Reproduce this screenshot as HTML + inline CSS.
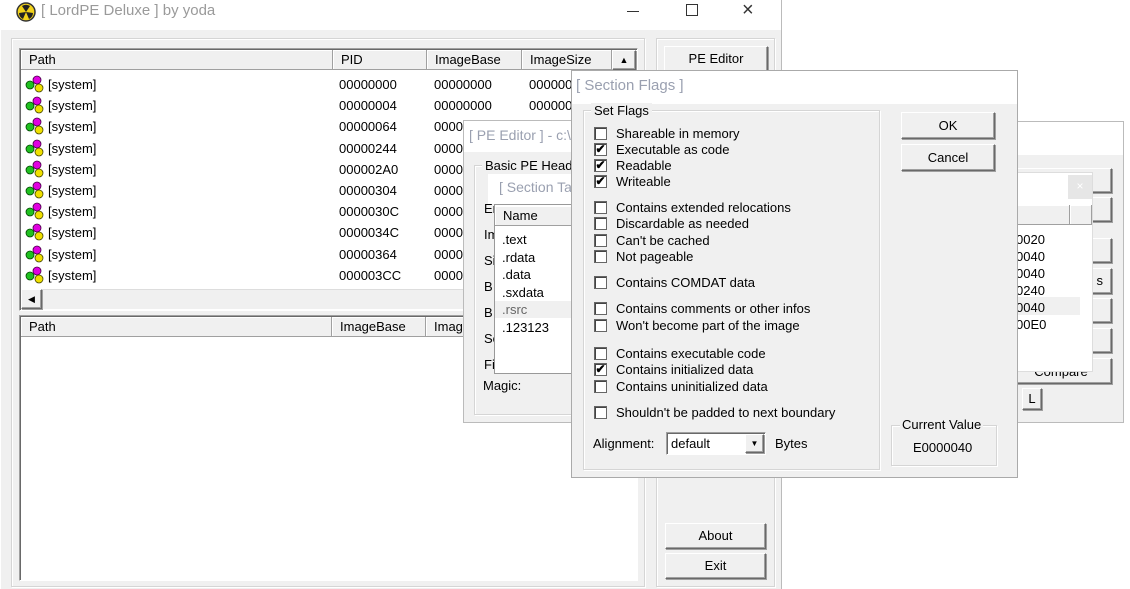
<!DOCTYPE html>
<html><head><meta charset="utf-8"><style>
*{box-sizing:border-box;margin:0;padding:0}
body{width:1130px;height:589px;background:#fff;position:relative;overflow:hidden;font-family:"Liberation Sans",sans-serif;font-size:12px;color:#000}
.a{position:absolute}
.g{background:#f0f0f0}
.w{background:#fff}
.sunk{border:1px solid #a0a0a0;border-right-color:#fff;border-bottom-color:#fff;box-shadow:inset 1px 1px 0 #696969}
.grp{border:1px solid #d5d5d5;box-shadow:inset 1px 1px 0 #fff,1px 1px 0 #fff}
.btn{position:absolute;background:#f0f0f0;border:1px solid #fff;border-right-color:#696969;border-bottom-color:#696969;box-shadow:1px 1px 0 #a0a0a0, inset -1px -1px 0 #a0a0a0;text-align:center;font-size:13px}
.hd{position:absolute;background:#f0f0f0;border-right:1px solid #a0a0a0;border-bottom:1px solid #a0a0a0;box-shadow:inset 1px 1px 0 #fff;height:20px;line-height:19px;padding-left:8px;font-size:13px}
.t{position:absolute;white-space:nowrap;font-size:13px}
.title{position:absolute;font-size:15px;color:#9aa0b0;white-space:nowrap}
.cb{position:absolute;width:13px;height:13px;background:#fff;border:1px solid #666;box-shadow:inset 1px 1px 0 #444;font-size:12px;line-height:11px;text-align:center;font-weight:bold}
.ic{position:absolute;width:22px;height:18px}
</style></head><body>

<div class="a w" style="left:0;top:0;width:782px;height:589px;border-right:1px solid #bbb"></div>
<svg class="a" style="left:16px;top:2px" width="20" height="20"><circle cx="10" cy="10" r="9" fill="#f2d21a" stroke="#333" stroke-width="1.5"/><path d="M10 10 L6 4 A7 7 0 0 1 14 4Z M10 10 L17 11 A7 7 0 0 1 13 17Z M10 10 L7 17 A7 7 0 0 1 3 11Z" fill="#222"/></svg>
<div class="title" style="left:41px;top:2px;color:#9a9a9a">[ LordPE Deluxe ] by yoda</div>
<div class="a" style="left:627px;top:11px;width:12px;height:1px;background:#333"></div>
<div class="a" style="left:686px;top:4px;width:12px;height:12px;border:1px solid #333"></div>
<div class="t" style="left:742px;top:-1px;font-size:20px;color:#333">×</div>
<div class="a g" style="left:1px;top:30px;width:780px;height:559px"></div>
<div class="a grp" style="left:11px;top:38px;width:634px;height:549px"></div>
<div class="a grp" style="left:656px;top:38px;width:119px;height:549px"></div>

<div class="a w sunk" style="left:19px;top:48px;width:619px;height:263px"></div>
<div class="hd" style="left:21px;top:50px;width:312px">Path</div>
<div class="hd" style="left:333px;top:50px;width:94px">PID</div>
<div class="hd" style="left:427px;top:50px;width:95px">ImageBase</div>
<div class="hd" style="left:522px;top:50px;width:90px">ImageSize</div>
<div class="btn" style="left:612px;top:50px;width:24px;height:20px;font-size:9px;line-height:18px">▲</div>
<div id="rows"></div>
<div class="a g" style="left:21px;top:289px;width:615px;height:20px;border-top:1px solid #ddd"></div>
<div class="btn" style="left:21px;top:289px;width:21px;height:20px;font-size:9px;line-height:18px">◀</div>

<div class="a w sunk" style="left:19px;top:315px;width:619px;height:266px"></div>
<div class="hd" style="left:21px;top:317px;width:311px">Path</div>
<div class="hd" style="left:332px;top:317px;width:94px">ImageBase</div>
<div class="hd" style="left:426px;top:317px;width:210px">ImageSize</div>

<div class="btn" style="left:664px;top:46px;width:104px;height:26px;line-height:23px">PE Editor</div>
<div class="btn" style="left:665px;top:523px;width:101px;height:26px;line-height:24px">About</div>
<div class="btn" style="left:665px;top:553px;width:101px;height:26px;line-height:24px">Exit</div>

<div class="a g" style="left:1000px;top:121px;width:124px;height:302px;border:1px solid #bbb"></div>
<div class="a w" style="left:1001px;top:122px;width:122px;height:33px"></div>
<div class="btn" style="left:1010px;top:168px;width:102px;height:25px"></div>
<div class="btn" style="left:1010px;top:197px;width:102px;height:25px"></div>
<div class="btn" style="left:1010px;top:238px;width:102px;height:25px"></div>
<div class="btn" style="left:1010px;top:268px;width:102px;height:26px;text-align:right;padding-right:8px;line-height:24px">s</div>
<div class="btn" style="left:1010px;top:298px;width:102px;height:25px"></div>
<div class="btn" style="left:1010px;top:328px;width:102px;height:25px"></div>
<div class="btn" style="left:1010px;top:358px;width:102px;height:26px;line-height:26px">Compare</div>
<div class="btn" style="left:1022px;top:388px;width:20px;height:22px;line-height:20px">L</div>
<div class="a w" style="left:1000px;top:172px;width:93px;height:200px;border:1px solid #ddd"></div>
<div class="a" style="left:1068px;top:175px;width:24px;height:24px;background:#e6e6e6;color:#fff;text-align:center;line-height:22px">×</div>
<div class="hd" style="left:1000px;top:205px;width:70px;padding:0"></div>
<div class="hd" style="left:1070px;top:205px;width:22px;padding:0"></div>
<div class="a" style="left:1000px;top:297px;width:80px;height:18px;background:#f0f0f0"></div>
<div class="t" style="left:1016px;top:231px;line-height:17px">0020<br>0040<br>0040<br>0240<br>0040<br>00E0</div>

<div class="a g" style="left:463px;top:120px;width:140px;height:303px;border:1px solid #bbb"></div>
<div class="a w" style="left:464px;top:121px;width:138px;height:31px"></div>
<div class="title" style="left:469px;top:127px;font-size:14px">[ PE Editor ] - c:\</div>
<div class="a grp" style="left:474px;top:165px;width:130px;height:250px"></div>
<div class="t g" style="left:482px;top:158px;padding:0 3px">Basic PE Header</div>
<div class="t" style="left:484px;top:196px;line-height:26px">En<br>Im<br>Si<br>B<br>B<br>Se<br>Fi</div>
<div class="a w" style="left:488px;top:174px;width:110px;height:30px"></div>
<div class="title" style="left:499px;top:179px;font-size:14px">[ Section Table</div>
<div class="a w" style="left:494px;top:204px;width:100px;height:170px;border:1px solid #999;border-right:none"></div>
<div class="hd" style="left:495px;top:206px;width:100px">Name</div>
<div class="a" style="left:495px;top:301px;width:80px;height:17px;background:#f0f0f0"></div>
<div class="t" style="left:502px;top:231px;line-height:17.5px">.text<br>.rdata<br>.data<br>.sxdata<br><span style="color:#666">.rsrc</span><br>.123123</div>
<div class="t" style="left:483px;top:378px">Magic:</div>

<div class="a g" style="left:571px;top:70px;width:447px;height:408px;border:1px solid #aaa"></div>
<div class="a w" style="left:572px;top:71px;width:445px;height:33px"></div>
<div class="title" style="left:576px;top:77px">[ Section Flags ]</div>
<div class="a grp" style="left:583px;top:110px;width:297px;height:360px"></div>
<div class="t g" style="left:591px;top:103px;padding:0 3px">Set Flags</div>
<div id="flags"></div>
<div class="t" style="left:593px;top:436px">Alignment:</div>
<div class="a w sunk" style="left:666px;top:432px;width:100px;height:23px"></div>
<div class="t" style="left:671px;top:436px">default</div>
<div class="btn" style="left:745px;top:434px;width:19px;height:19px;font-size:8px;line-height:18px">▼</div>
<div class="t" style="left:775px;top:436px">Bytes</div>
<div class="btn" style="left:901px;top:112px;width:94px;height:27px;line-height:25px">OK</div>
<div class="btn" style="left:901px;top:144px;width:94px;height:27px;line-height:25px">Cancel</div>
<div class="a grp" style="left:891px;top:425px;width:106px;height:41px"></div>
<div class="t g" style="left:900px;top:417px;padding:0 2px">Current Value</div>
<div class="t" style="left:913px;top:440px">E0000040</div>

<script>
var r='',pids=['00000000','00000004','00000064','00000244','000002A0','00000304','0000030C','0000034C','00000364','000003CC'];
for(var i=0;i<10;i++){var y=75+i*21.2;
r+='<svg class="ic" style="left:24px;top:'+y+'px" viewBox="0 0 22 18"><circle cx="13" cy="5" r="4" fill="#e000e0" stroke="#404" stroke-width=".8"/><circle cx="6" cy="10" r="4" fill="#20c020" stroke="#040" stroke-width=".8"/><circle cx="15" cy="13" r="4" fill="#f0e000" stroke="#440" stroke-width=".8"/></svg>';
r+='<div class="t" style="left:48px;top:'+(y+2)+'px">[system]</div><div class="t" style="left:339px;top:'+(y+2)+'px">'+pids[i]+'</div><div class="t" style="left:434px;top:'+(y+2)+'px">00000000</div><div class="t" style="left:529px;top:'+(y+2)+'px">00000000</div>';}
document.getElementById('rows').innerHTML=r;
var f=[[126,'Shareable in memory',0],[142,'Executable as code',1],[158,'Readable',1],[174,'Writeable',1],[200,'Contains extended relocations',0],[216,'Discardable as needed',0],[233,"Can't be cached",0],[249,'Not pageable',0],[275,'Contains COMDAT data',0],[301,'Contains comments or other infos',0],[318,"Won't become part of the image",0],[346,'Contains executable code',0],[362,'Contains initialized data',1],[379,'Contains uninitialized data',0],[405,"Shouldn't be padded to next boundary",0]];
var s='';f.forEach(function(a){s+='<div class="cb" style="left:594px;top:'+(a[0]+1)+'px">'+(a[2]?'✔':'')+'</div><div class="t" style="left:616px;top:'+a[0]+'px">'+a[1]+'</div>';});
document.getElementById('flags').innerHTML=s;
</script>
</body></html>
